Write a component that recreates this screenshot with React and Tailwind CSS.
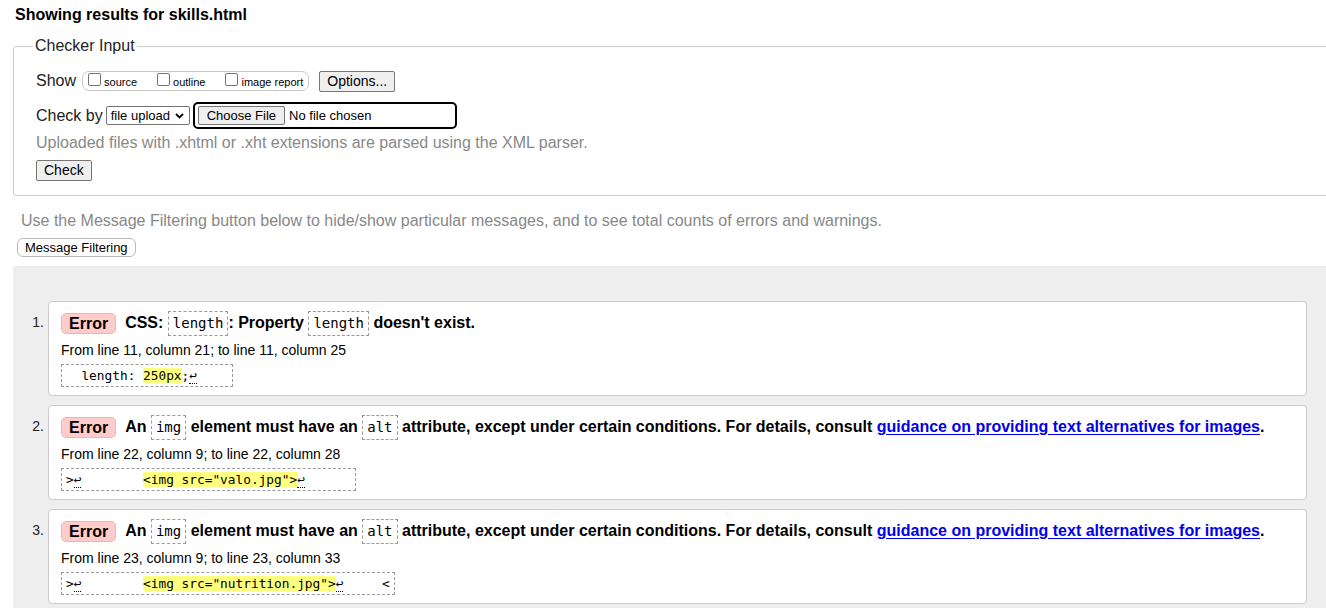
const mono = "font-['DejaVu_Sans_Mono','Liberation_Mono',monospace]";

function Ret() {
  return <span className="border-b border-dotted border-black">↩</span>;
}

function Code({ children }) {
  return (
    <span className={`inline-block align-middle border border-dashed border-[#999] px-[4px] py-[2px] leading-[19px] text-[14px] font-normal ${mono}`}>
      {children}
    </span>
  );
}

function Badge() {
  return (
    <span className="inline-block align-middle h-[21px] leading-[19px] px-[7px] mr-[9px] border border-[#f0b4b4] bg-[#ffcccc] rounded-[5px]">
      Error
    </span>
  );
}

function Hl({ children }) {
  return <span className="bg-[#ffff80]">{children}</span>;
}

function Extract({ children }) {
  return (
    <div className={`mt-[5px] block w-fit h-[23px] border border-dashed border-[#999] px-[4px] leading-[21px] text-[12.8px] whitespace-pre ${mono}`}>
      {children}
    </div>
  );
}

function Item({ n, heading, from, extract }) {
  return (
    <div className="flex mb-[9px]">
      <div className="w-[35px] shrink-0 text-right pr-[4px] pt-[9px] leading-[25px] text-[14px] text-[#222]">{n}.</div>
      <div className="flex-1 h-[95px] border border-[#ccc] rounded-[4px] bg-white pt-[8px] pl-[12px]">
        <div className="h-[25px] leading-[25px] text-[16px] font-bold text-black whitespace-nowrap">
          <Badge />
          {heading}
        </div>
        <div className="mt-[6px] h-[18px] text-[14px] leading-[18px]">{from}</div>
        <Extract>{extract}</Extract>
      </div>
    </div>
  );
}

function Checkbox({ label, last }) {
  return (
    <span className={`flex items-start ${last ? "" : "mr-[20px]"}`}>
      <span className="inline-block w-[13px] h-[13px] border border-[#767676] rounded-[2px] bg-white" />
      <span className="ml-[3px] mt-[3px] leading-[13px] text-[11px]">{label}</span>
    </span>
  );
}

export default function App() {
  const imgHeading = (
    <>
      An <Code>img</Code> element must have an <Code>alt</Code> attribute, except under certain conditions. For details, consult{" "}
      <a href="#" className="text-[#0000ee] underline underline-offset-2">guidance on providing text alternatives for images</a>.
    </>
  );
  return (
    <div className="h-[608px] w-full overflow-hidden bg-white text-black font-['Liberation_Sans',Arial,sans-serif]">
      <h2 className="pl-[15px] pt-[6px] text-[16px] leading-[18px] font-bold">Showing results for skills.html</h2>
      <fieldset className="ml-[13px] mr-[-10px] mt-[13px] border border-[#ccc] rounded-[3px] p-0">
        <legend className="ml-[19px] px-[2px] text-[16px] leading-[18px] text-[#222]">Checker Input</legend>
        <div className="pl-[22px] pt-[15px] pb-[14px]">
          <div className="flex items-center h-[22px]">
            <span className="text-[16px] text-[#222]">Show</span>
            <div className="ml-[6px] h-[20px] flex items-start pt-[1px] border border-[#c8c8c8] rounded-[7px] pl-[5px] pr-[5px]">
              <Checkbox label="source" />
              <Checkbox label="outline" />
              <Checkbox label="image report" last />
            </div>
            <button className="ml-[10px] h-[21px] px-[7px] border border-[#767676] bg-[#efefef] rounded-[2px] text-[14px] leading-[19px]">
              Options...
            </button>
          </div>
          <div className="mt-[10px] flex items-center h-[27px]">
            <span className="text-[16px] text-[#222]">Check by</span>
            <div className="ml-[3px] h-[19px] w-[84px] border border-[#767676] rounded-[2px] flex items-center justify-between pl-[4px] pr-[5px] text-[13px]">
              <span>file upload</span>
              <svg width="9" height="6" viewBox="0 0 9 6">
                <path d="M1 1l3.5 3.5L8 1" fill="none" stroke="#000" strokeWidth="1.8" />
              </svg>
            </div>
            <div className="ml-[3px] h-[27px] w-[264px] border-2 border-black rounded-[5px] flex items-center pl-[3px] text-[13px]">
              <span className="h-[19px] px-[8px] border border-[#767676] bg-[#efefef] rounded-[2px] leading-[17px]">Choose File</span>
              <span className="ml-[4px]">No file chosen</span>
            </div>
          </div>
          <div className="mt-[5px] leading-[18px] text-[16px] text-[#888]">
            Uploaded files with .xhtml or .xht extensions are parsed using the XML parser.
          </div>
          <div className="mt-[8px] flex">
            <button className="h-[21px] px-[7px] border border-[#767676] bg-[#efefef] rounded-[2px] text-[14px] leading-[19px]">
              Check
            </button>
          </div>
        </div>
      </fieldset>
      <p className="pl-[21px] mt-[16px] leading-[18px] text-[16px] text-[#888]">
        Use the Message Filtering button below to hide/show particular messages, and to see total counts of errors and warnings.
      </p>
      <div className="ml-[17px] mt-[8px] flex">
        <button className="h-[19px] px-[7px] border border-[#bbb] rounded-[6px] bg-white text-[13px] leading-[17px]">
          Message Filtering
        </button>
      </div>
      <div className="mt-[9px] ml-[13px] bg-[#eeeeee] pt-[35px] pr-[19px] h-[400px]">
        <Item
          n={1}
          heading={
            <>
              CSS: <Code>length</Code>: Property <Code>length</Code> doesn't exist.
            </>
          }
          from="From line 11, column 21; to line 11, column 25"
          extract={
            <>
              {"  length: "}
              <Hl>250px</Hl>;<Ret />
              {"    "}
            </>
          }
        />
        <Item
          n={2}
          heading={imgHeading}
          from="From line 22, column 9; to line 22, column 28"
          extract={
            <>
              {">"}
              <Ret />
              {"        "}
              <Hl>{'<img src="valo.jpg">'}</Hl>
              <Ret />
              {"      "}
            </>
          }
        />
        <Item
          n={3}
          heading={imgHeading}
          from="From line 23, column 9; to line 23, column 33"
          extract={
            <>
              {">"}
              <Ret />
              {"        "}
              <Hl>{'<img src="nutrition.jpg">'}</Hl>
              <Ret />
              {"     <"}
            </>
          }
        />
      </div>
    </div>
  );
}
